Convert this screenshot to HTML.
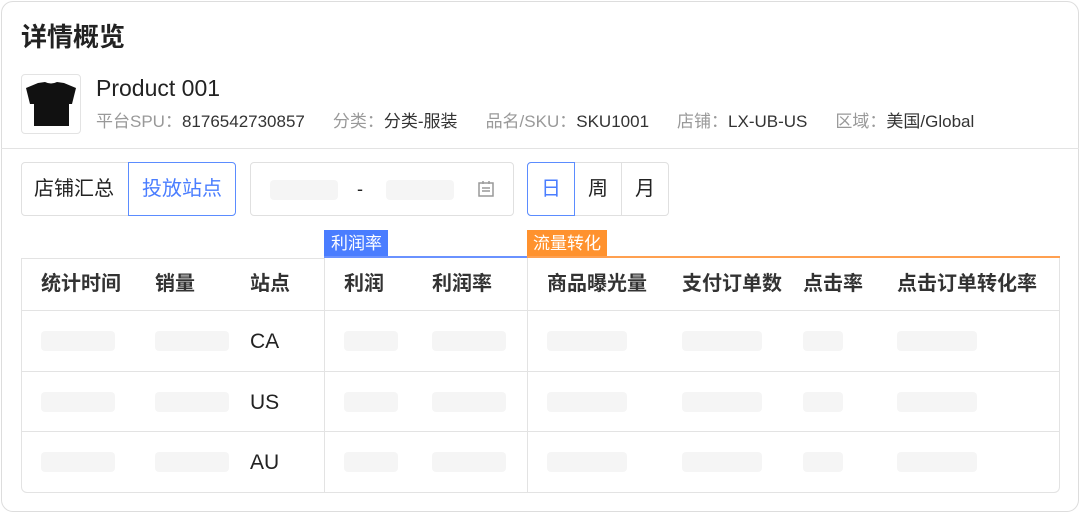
<!DOCTYPE html>
<html><head><meta charset="utf-8"><style>
*{box-sizing:border-box;margin:0;padding:0}
body{width:1080px;height:513px;background:#fff;font-family:"Liberation Sans","Noto Sans CJK SC",sans-serif;color:#222;position:relative;overflow:hidden}
.a{position:absolute}
.card{left:1px;top:1px;width:1078px;height:511px;border:1px solid #ddd;border-radius:12px}
.t{white-space:nowrap;line-height:1}
.sk{position:absolute;height:20px;background:#f5f5f5;border-radius:4px}
.h{font-size:20px;font-weight:bold;color:#333;top:274px}
.g{color:#999}
</style></head><body>
<div class="a card"></div>
<div class="a t" style="left:21px;top:24px;font-size:26px;font-weight:bold;color:#222">详情概览</div>
<div class="a" style="left:21px;top:74px;width:60px;height:60px;border:1px solid #e3e3e3;border-radius:4px"></div>
<svg class="a" style="left:21px;top:74px" width="60" height="60"><path d="M17 9 L24 8 Q30 11 36 8 L43 9 L55 14 L51 30 L48 30 L48 52 L13 52 L13 30 L9 30 L5 14 Z" fill="#111"/></svg>
<div class="a t" style="left:96px;top:77px;font-size:23px;color:#222">Product 001</div>
<div class="a t" style="left:96px;top:113px;font-size:17px;color:#333"><span class="g">平台SPU：</span>8176542730857<span class="g" style="margin-left:28px">分类：</span>分类-服装<span class="g" style="margin-left:28px">品名/SKU：</span>SKU1001<span class="g" style="margin-left:28px">店铺：</span>LX-UB-US<span class="g" style="margin-left:28px">区域：</span>美国/Global</div>
<div class="a" style="left:1px;top:148px;width:1078px;height:1px;background:#e3e3e3"></div>
<div class="a" style="left:21px;top:162px;width:108px;height:54px;border:1px solid #e0e0e0;border-radius:4px 0 0 4px"></div>
<div class="a t" style="left:34px;top:179px;font-size:20px">店铺汇总</div>
<div class="a" style="left:128px;top:162px;width:108px;height:54px;border:1.5px solid #5b8cff;border-radius:0 4px 4px 0"></div>
<div class="a t" style="left:142px;top:179px;font-size:20px;color:#4a7dff">投放站点</div>
<div class="a" style="left:250px;top:162px;width:264px;height:54px;border:1px solid #e0e0e0;border-radius:4px"></div>
<div class="sk" style="left:270px;top:180px;width:68px"></div>
<div class="a t" style="left:357px;top:180px;font-size:18px">-</div>
<div class="sk" style="left:386px;top:180px;width:68px"></div>
<svg class="a" style="left:477px;top:180px" width="18" height="18"><rect x="2" y="3" width="14" height="13" fill="none" stroke="#999" stroke-width="1.5"/><path d="M6 1v3M12 1v3M5 8h8M5 11h8" stroke="#999" stroke-width="1.5"/></svg>
<div class="a" style="left:527px;top:162px;width:142px;height:54px;border:1px solid #e0e0e0;border-radius:4px"></div>
<div class="a" style="left:621px;top:162px;width:1px;height:54px;background:#e0e0e0"></div>
<div class="a" style="left:527px;top:162px;width:48px;height:54px;border:1.5px solid #5b8cff;border-radius:4px 0 0 4px"></div>
<div class="a t" style="left:541px;top:179px;font-size:20px;color:#4a7dff">日</div>
<div class="a t" style="left:588px;top:179px;font-size:20px">周</div>
<div class="a t" style="left:635px;top:179px;font-size:20px">月</div>
<div class="a" style="left:324px;top:230px;width:64px;height:27px;background:#4a7dff"></div>
<div class="a t" style="left:331px;top:235px;font-size:17px;color:#fff">利润率</div>
<div class="a" style="left:324px;top:256px;width:203px;height:2px;background:#6a92ff"></div>
<div class="a" style="left:527px;top:230px;width:80px;height:27px;background:#ff922e"></div>
<div class="a t" style="left:533px;top:235px;font-size:17px;color:#fff">流量转化</div>
<div class="a" style="left:527px;top:256px;width:533px;height:2px;background:#ffa050"></div>
<div class="a" style="left:21px;top:258px;width:1039px;height:235px;border:1px solid #e3e3e3;border-top:none;border-radius:0 0 6px 6px"></div>
<div class="a" style="left:21px;top:258px;width:303px;height:1px;background:#e3e3e3"></div>
<div class="a" style="left:324px;top:258px;width:1px;height:234px;background:#e3e3e3"></div>
<div class="a" style="left:527px;top:258px;width:1px;height:234px;background:#e3e3e3"></div>
<div class="a" style="left:21px;top:310px;width:1039px;height:1px;background:#e3e3e3"></div>
<div class="a" style="left:21px;top:371px;width:1039px;height:1px;background:#e3e3e3"></div>
<div class="a" style="left:21px;top:431px;width:1039px;height:1px;background:#e3e3e3"></div>
<div class="a t h" style="left:41px">统计时间</div>
<div class="a t h" style="left:155px">销量</div>
<div class="a t h" style="left:250px">站点</div>
<div class="a t h" style="left:344px">利润</div>
<div class="a t h" style="left:432px">利润率</div>
<div class="a t h" style="left:547px">商品曝光量</div>
<div class="a t h" style="left:682px">支付订单数</div>
<div class="a t h" style="left:803px">点击率</div>
<div class="a t h" style="left:897px">点击订单转化率</div>
<div class="a t" style="left:250px;top:331px;font-size:21px">CA</div>
<div class="a t" style="left:250px;top:392px;font-size:21px">US</div>
<div class="a t" style="left:250px;top:452px;font-size:21px">AU</div>
<div class="sk" style="left:41px;top:331px;width:74px"></div><div class="sk" style="left:155px;top:331px;width:74px"></div><div class="sk" style="left:344px;top:331px;width:54px"></div><div class="sk" style="left:432px;top:331px;width:74px"></div><div class="sk" style="left:547px;top:331px;width:80px"></div><div class="sk" style="left:682px;top:331px;width:80px"></div><div class="sk" style="left:803px;top:331px;width:40px"></div><div class="sk" style="left:897px;top:331px;width:80px"></div>
<div class="sk" style="left:41px;top:392px;width:74px"></div><div class="sk" style="left:155px;top:392px;width:74px"></div><div class="sk" style="left:344px;top:392px;width:54px"></div><div class="sk" style="left:432px;top:392px;width:74px"></div><div class="sk" style="left:547px;top:392px;width:80px"></div><div class="sk" style="left:682px;top:392px;width:80px"></div><div class="sk" style="left:803px;top:392px;width:40px"></div><div class="sk" style="left:897px;top:392px;width:80px"></div>
<div class="sk" style="left:41px;top:452px;width:74px"></div><div class="sk" style="left:155px;top:452px;width:74px"></div><div class="sk" style="left:344px;top:452px;width:54px"></div><div class="sk" style="left:432px;top:452px;width:74px"></div><div class="sk" style="left:547px;top:452px;width:80px"></div><div class="sk" style="left:682px;top:452px;width:80px"></div><div class="sk" style="left:803px;top:452px;width:40px"></div><div class="sk" style="left:897px;top:452px;width:80px"></div>
</body></html>
